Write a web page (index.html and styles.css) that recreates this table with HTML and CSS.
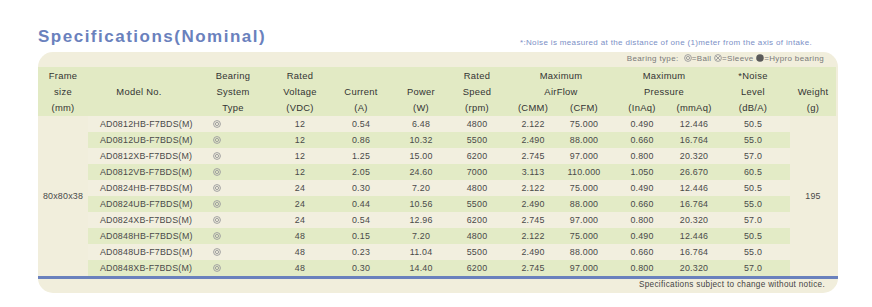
FILE: index.html
```html
<!DOCTYPE html>
<html lang="en">
<head>
  <meta charset="UTF-8" />
  <title>Specifications (Nominal)</title>
  <link rel="stylesheet" href="styles.css">
</head>
<body>

  <div class="hoja">
    <div class="cabecera">
      <h1>Specifications(Nominal)</h1>
      <p class="nota">*:Noise is measured at the distance of one (1)meter from the axis of intake.</p>
    </div>

    <div class="panel">
      <p class="leyenda">
        Bearing type:&nbsp;
        <svg class="ico" viewBox="0 0 8 8"><circle cx="4" cy="4" r="3.4"/><circle cx="4" cy="4" r="1.6"/></svg>=Ball
        <svg class="ico" viewBox="0 0 8 8"><circle cx="4" cy="4" r="3.4"/><path d="M1.8 1.8 6.2 6.2M6.2 1.8 1.8 6.2"/></svg>=Sleeve
        <svg class="ico lleno" viewBox="0 0 8 8"><circle cx="4" cy="4" r="3.8"/></svg>=Hypro bearing
      </p>

      <table class="specs">
        <colgroup>
          <col style="width:50px"><col style="width:102px"><col style="width:86px"><col style="width:48px">
          <col style="width:74px"><col style="width:46px"><col style="width:66px"><col style="width:46px">
          <col style="width:56px"><col style="width:60px"><col style="width:44px"><col style="width:74px">
          <col style="width:46px">
        </colgroup>
        <thead>
          <tr class="fila-a">
            <th>Frame<br>size</th>
            <th rowspan="2" class="medio">Model No.</th>
            <th>Bearing<br>System</th>
            <th>Rated<br>Voltage</th>
            <th>Current</th>
            <th>Power</th>
            <th>Rated<br>Speed</th>
            <th colspan="2">Maximum<br>AirFlow</th>
            <th colspan="2">Maximum<br>Pressure</th>
            <th>*Noise<br>Level</th>
            <th>Weight</th>
          </tr>
          <tr class="fila-b">
            <th>(mm)</th>
            <th>Type</th>
            <th>(VDC)</th>
            <th>(A)</th>
            <th>(W)</th>
            <th>(rpm)</th>
            <th>(CMM)</th>
            <th>(CFM)</th>
            <th>(InAq)</th>
            <th>(mmAq)</th>
            <th>(dB/A)</th>
            <th>(g)</th>
          </tr>
        </thead>
        <tbody id="cuerpo"></tbody>
      </table>

      <div class="linea"></div>
      <p class="aviso">Specifications subject to change without notice.</p>
    </div>
  </div>

  <script src="script.js"></script>
</body>
</html>
```

FILE: styles.css
```css
  /* Base */
  * {
    margin: 0;
    padding: 0;
    box-sizing: border-box;
  }

  body {
    background: #fff;
    font-family: 'Liberation Sans', Arial, sans-serif;
    color: #444;
  }

  .hoja {
    padding: 23px 34px 0 38px;
  }

  /* Titulo y nota */
  .cabecera {
    display: flex;
    justify-content: space-between;
    align-items: flex-end;
    height: 24px;
  }

  h1 {
    font-size: 17px;
    line-height: 20px;
    font-weight: bold;
    letter-spacing: 1.5px;
    color: #6a81bd;
  }

  .nota {
    font-size: 8px;
    line-height: 10px;
    letter-spacing: 0.35px;
    color: #7b8fc6;
    margin-right: 26px;
    margin-bottom: -1px;
  }

  /* Panel beige */
  .panel {
    margin-top: 5px;
    width: 800px;
    background: #f1eedc;
    border-radius: 15px;
    overflow: hidden;
  }

  .leyenda {
    height: 15px;
    line-height: 14px;
    font-size: 8px;
    letter-spacing: 0.35px;
    color: #7a7a7a;
    text-align: right;
    padding-right: 14px;
  }

  .ico {
    width: 8px;
    height: 8px;
    vertical-align: -1px;
    fill: none;
    stroke: #a0a0a0;
    stroke-width: 1;
  }

  .ico.lleno {
    fill: #5a5a5a;
    stroke: none;
  }

  /* Tabla */
  .specs {
    border-collapse: collapse;
    border-spacing: 0;
    table-layout: fixed;
    width: 798px;
  }

  .specs th {
    font-weight: normal;
    font-size: 9.4px;
    letter-spacing: 0.3px;
    line-height: 16px;
    color: #333;
    text-align: center;
    background: #e2eac4;
  }

  .fila-a th {
    vertical-align: bottom;
    padding-top: 1px;
  }

  .specs th.medio {
    vertical-align: middle;
  }

  .specs td {
    height: 16px;
    line-height: 16px;
    font-size: 8.9px;
    letter-spacing: 0.2px;
    color: #4a4a4a;
    text-align: center;
    background: #f2efdf;
    white-space: nowrap;
  }

  .specs tr.par td {
    background: #e3ebc6;
  }

  .specs td.marco,
  .specs td.peso {
    background: #f1eedc;
    vertical-align: middle;
  }

  .specs td.modelo {
    text-align: left;
    padding-left: 12px;
  }

  .specs td.rodamiento {
    text-align: left;
    padding-left: 23px;
  }

  .specs td.rodamiento .ico {
    vertical-align: -1px;
  }

  .linea {
    height: 3px;
    background: #6a81bd;
  }

  .aviso {
    height: 14px;
    line-height: 11px;
    font-size: 8.2px;
    letter-spacing: 0.3px;
    color: #444;
    text-align: right;
    padding-right: 13px;
  }
```

FILE: script.js
```js
  const filas = [
    ['AD0812HB-F7BDS(M)', '12', '0.54', '6.48', '4800', '2.122', '75.000', '0.490', '12.446', '50.5'],
    ['AD0812UB-F7BDS(M)', '12', '0.86', '10.32', '5500', '2.490', '88.000', '0.660', '16.764', '55.0'],
    ['AD0812XB-F7BDS(M)', '12', '1.25', '15.00', '6200', '2.745', '97.000', '0.800', '20.320', '57.0'],
    ['AD0812VB-F7BDS(M)', '12', '2.05', '24.60', '7000', '3.113', '110.000', '1.050', '26.670', '60.5'],
    ['AD0824HB-F7BDS(M)', '24', '0.30', '7.20', '4800', '2.122', '75.000', '0.490', '12.446', '50.5'],
    ['AD0824UB-F7BDS(M)', '24', '0.44', '10.56', '5500', '2.490', '88.000', '0.660', '16.764', '55.0'],
    ['AD0824XB-F7BDS(M)', '24', '0.54', '12.96', '6200', '2.745', '97.000', '0.800', '20.320', '57.0'],
    ['AD0848HB-F7BDS(M)', '48', '0.15', '7.20', '4800', '2.122', '75.000', '0.490', '12.446', '50.5'],
    ['AD0848UB-F7BDS(M)', '48', '0.23', '11.04', '5500', '2.490', '88.000', '0.660', '16.764', '55.0'],
    ['AD0848XB-F7BDS(M)', '48', '0.30', '14.40', '6200', '2.745', '97.000', '0.800', '20.320', '57.0']
  ];

  const bola = '<svg class="ico" viewBox="0 0 8 8"><circle cx="4" cy="4" r="3.4"/><circle cx="4" cy="4" r="1.6"/></svg>';
  const cuerpo = document.getElementById('cuerpo');

  filas.forEach((f, i) => {
    const tr = document.createElement('tr');
    if (i % 2 === 1) tr.className = 'par';
    let html = '';
    if (i === 0) html += '<td class="marco" rowspan="10">80x80x38</td>';
    html += '<td class="modelo">' + f[0] + '</td>';
    html += '<td class="rodamiento">' + bola + '</td>';
    for (let k = 1; k < f.length; k++) html += '<td>' + f[k] + '</td>';
    if (i === 0) html += '<td class="peso" rowspan="10">195</td>';
    tr.innerHTML = html;
    cuerpo.appendChild(tr);
  });
```
